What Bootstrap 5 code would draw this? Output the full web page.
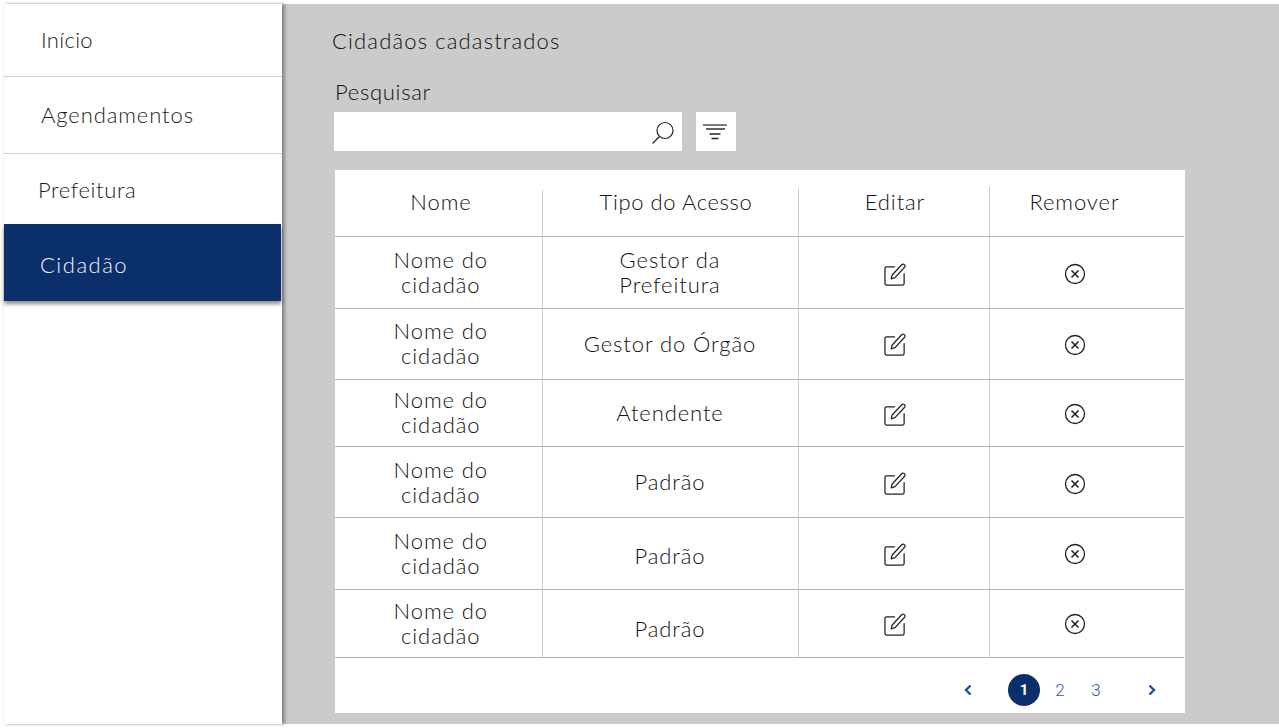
<!DOCTYPE html>
<html lang="pt-BR">
<head>
    <meta charset="UTF-8">
    <meta name="viewport" content="width=device-width, initial-scale=1.0">
    <title>Cidadãos cadastrados</title>
    <link rel="stylesheet" href="https://cdn.jsdelivr.net/npm/bootstrap@5.3.0/dist/css/bootstrap.min.css">
    <style>
        html, body { height: 100%; overflow: hidden; }
        body {
            background: #fff;
            padding: 4px 0 4px 4px;
            font-family: "Lato", "Liberation Sans", sans-serif;
            font-weight: 300;
            color: #111;
            letter-spacing: .9px;
        }
        .painel { height: 720px; }

        /* menu lateral */
        .lateral {
            width: 278px;
            flex: none;
            background: #fff;
            position: relative;
            z-index: 1;
            box-shadow: 3px 0 3px rgba(0, 0, 0, .3), 0 0 1px rgba(0, 0, 0, .3);
        }
        .lateral .list-group-item {
            border-width: 0 0 1px;
            border-color: #cfcfcf;
            font-size: 22px;
            color: #1c1c1c;
            display: flex;
            align-items: center;
            padding: 0 0 0 37px;
            background: transparent;
        }
        .lateral .item-inicio { height: 73px; padding-bottom: 2px; letter-spacing: .3px; }
        .lateral .item-agenda { height: 77px; padding-bottom: 2px; }
        .lateral .item-prefeitura { height: 70px; padding-left: 34px; border-bottom: 0; letter-spacing: .6px; }
        .lateral .item-ativo {
            height: 77px;
            width: 277px;
            background: #0b2f6b;
            color: #eef3fb;
            padding: 3px 0 0 36px;
            border: 0;
            letter-spacing: 1.5px;
            box-shadow: 0 3px 4px rgba(0, 0, 0, .45);
        }

        /* area principal */
        .conteudo {
            background: #cbcbcb;
            padding: 0 0 0 52px;
        }
        .titulo-pagina {
            font-size: 22px;
            font-weight: 300;
            line-height: 30px;
            letter-spacing: 1.15px;
            margin: 22px 0 0 -2px;
        }
        .rotulo-busca {
            font-size: 22px;
            line-height: 30px;
            letter-spacing: .7px;
            margin: 21px 0 5px 1px;
        }
        .caixa-busca { width: 348px; height: 39px; }
        .caixa-busca input {
            border: 0;
            border-radius: 0;
            height: 39px;
            padding-right: 40px;
        }
        .icone-lupa { position: absolute; right: 6px; top: 7px; }
        .btn-filtro {
            width: 40px;
            height: 39px;
            padding: 0;
            border: 0;
            border-radius: 0;
            background: #fff;
            margin-left: 14px;
        }

        /* tabela */
        .quadro {
            width: 850px;
            height: 543px;
            margin: 19px 0 0 1px;
            background: #fff;
        }
        .quadro .table {
            table-layout: fixed;
            width: 849px;
            margin: 0;
            font-size: 22px;
            line-height: 25px;
            --bs-table-color: #111;
        }
        .quadro th, .quadro td {
            font-weight: 300;
            text-align: center;
            vertical-align: middle;
            padding: 0;
            border-color: #b5b5b5;
        }
        .quadro td { border-right: 1px solid #cfcfcf; }
        .quadro td:first-child, .cab-nome { padding-left: 5px; }
        .quadro td:nth-child(3), .cab-editar { padding-left: 3px; }
        .quadro td:last-child, .quadro th:last-child { border-right: 0; padding-right: 24px; }
        .quadro tbody tr:nth-child(2) td,
        .quadro tbody tr:nth-child(3) td,
        .quadro tbody tr:nth-child(5) td { padding-bottom: 1px; }
        .quadro tbody tr:nth-child(2) .cel-icone,
        .quadro tbody tr:nth-child(5) .cel-icone,
        .quadro tbody tr:nth-child(6) .cel-icone { padding-bottom: 2px; }
        .cel-icone svg { vertical-align: middle; }
        .col-nome { width: 207px; }
        .col-tipo { width: 256px; }
        .col-editar { width: 191px; }
        .cabecalho { height: 66px; }
        .cabecalho th { vertical-align: bottom; }
        .cab-celula {
            display: flex;
            align-items: center;
            justify-content: center;
            height: 46px;
            margin-right: -1px;
            padding-bottom: 22px;
            border-right: 1px solid #cfcfcf;
        }
        .cab-alta { height: 48px; padding: 0 0 20px 12px; letter-spacing: .6px; }
        .cab-maior { height: 50px; padding-bottom: 18px; }
        th:last-child .cab-celula { border-right: 0; margin-right: 0; }
        .linha-a { height: 72px; }
        .linha-b { height: 71px; }
        .linha-c { height: 67px; }
        .linha-d { height: 68px; }
        .quadro td.desce-1 { padding-top: 6px; padding-bottom: 0; }
        .quadro td.desce-2 { padding-top: 10px; }

        /* paginacao */
        .paginas { padding: 16px 0 0 0; }
        .paginas .pagination { margin: 0 21px 0 0; align-items: center; }
        .paginas .page-item .page-link,
        .paginas .page-item:not(:first-child) .page-link {
            border: 0;
            background: transparent;
            color: #2c5a9e;
            padding: 0;
            margin-left: 0;
            width: 36px;
            height: 32px;
            line-height: 32px;
            text-align: center;
            font-family: "Roboto", sans-serif;
            font-size: 17px;
            letter-spacing: 0;
        }
        .paginas .page-item .seta,
        .paginas .page-item:not(:first-child) .seta { width: 24px; display: flex; align-items: center; justify-content: center; }
        .paginas .item-esq { margin-right: 28px; }
        .paginas .item-dir { margin-left: 26px; }
        .paginas .atual { margin-right: 2px; }
        .paginas .page-item.atual .page-link,
        .paginas .page-item.atual:not(:first-child) .page-link {
            width: 32px;
            border-radius: 50%;
            background: #0b2f6b;
            color: #fff;
            font-weight: 700;
            font-size: 15px;
        }
    </style>
</head>
<body>
    <div class="painel d-flex">
        <!-- Menu lateral -->
        <div class="lateral">
            <div class="list-group list-group-flush">
                <a href="#" class="list-group-item item-inicio">Início</a>
                <a href="#" class="list-group-item item-agenda">Agendamentos</a>
                <a href="#" class="list-group-item item-prefeitura">Prefeitura</a>
                <a href="#" class="list-group-item item-ativo">Cidadão</a>
            </div>
        </div>

        <!-- Conteudo -->
        <div class="conteudo flex-grow-1">
            <h1 class="titulo-pagina">Cidadãos cadastrados</h1>
            <div class="rotulo-busca">Pesquisar</div>
            <div class="d-flex">
                <div class="caixa-busca position-relative">
                    <input type="text" class="form-control" aria-label="Pesquisar">
                    <svg class="icone-lupa" width="26" height="26" viewBox="0 0 26 26" fill="none" stroke="#222" stroke-width="1.2">
                        <circle cx="15" cy="11.5" r="8"/>
                        <path d="M9.5 17.5 2.500 24.500"/>
                    </svg>
                </div>
                <button type="button" class="btn btn-filtro d-flex align-items-center justify-content-center" aria-label="Filtrar">
                    <svg width="26" height="16" viewBox="0 0 26 16" stroke="#222" fill="none">
                        <path d="M0 1H24" stroke-width="1.200"/>
                        <path d="M3 5H22" stroke-width="1.400"/>
                        <path d="M6.500 10H17.500" stroke-width="1.500"/>
                        <path d="M8.500 14.500H15.500" stroke-width="1.500"/>
                    </svg>
                </button>
            </div>

            <div class="quadro">
                <table class="table">
                    <thead>
                        <tr class="cabecalho">
                            <th class="col-nome"><div class="cab-celula cab-nome">Nome</div></th>
                            <th class="col-tipo"><div class="cab-celula cab-alta">Tipo do Acesso</div></th>
                            <th class="col-editar"><div class="cab-celula cab-maior cab-editar">Editar</div></th>
                            <th><div class="cab-celula">Remover</div></th>
                        </tr>
                    </thead>
                    <tbody id="linhas"></tbody>
                </table>
                <div class="paginas d-flex justify-content-end">
                    <ul class="pagination">
                        <li class="page-item item-esq"><a class="page-link seta" href="#" aria-label="Anterior"><svg width="10" height="12" viewBox="0 0 10 12" fill="none" stroke="#1f4f9c" stroke-width="2.400"><path d="M7.500 1.500 3 6l4.500 4.500"/></svg></a></li>
                        <li class="page-item atual"><a class="page-link" href="#">1</a></li>
                        <li class="page-item"><a class="page-link" href="#">2</a></li>
                        <li class="page-item"><a class="page-link" href="#">3</a></li>
                        <li class="page-item item-dir"><a class="page-link seta" href="#" aria-label="Próxima"><svg width="10" height="12" viewBox="0 0 10 12" fill="none" stroke="#1f4f9c" stroke-width="2.400"><path d="M2.500 1.500 7 6l-4.500 4.500"/></svg></a></li>
                    </ul>
                </div>
            </div>
        </div>
    </div>

    <script src="https://cdn.jsdelivr.net/npm/bootstrap@5.3.0/dist/js/bootstrap.bundle.min.js"></script>
    <script>
        const cidadaos = [
            { tipo: 'Gestor da<br>Prefeitura', altura: 'linha-a', classe: '' },
            { tipo: 'Gestor do Órgão', altura: 'linha-b', classe: '' },
            { tipo: 'Atendente', altura: 'linha-c', classe: '' },
            { tipo: 'Padrão', altura: 'linha-b', classe: '' },
            { tipo: 'Padrão', altura: 'linha-a', classe: 'desce-1' },
            { tipo: 'Padrão', altura: 'linha-d', classe: 'desce-2' }
        ];

        const iconeEditar = `<svg width="23" height="23" viewBox="0 0 24 24" fill="none" stroke="#222" stroke-width="1.300" stroke-linejoin="round" stroke-linecap="round">
            <path d="M11 4H2.500A1.500 1.500 0 0 0 1 5.500V21.500A1.500 1.500 0 0 0 2.500 23H19.500A1.500 1.500 0 0 0 21 21.500V11"/>
            <path d="M7.500 16.500 8.500 12.500 18.500 1.800C19.300 1 20.500 1 21.300 1.700 22.100 2.400 22.200 3.600 21.500 4.400L11.500 15.300Z"/>
        </svg>`;
        const iconeRemover = `<svg width="22" height="22" viewBox="0 0 22 22" fill="none" stroke="#222">
            <circle cx="11" cy="11" r="9.500" stroke-width="1.300"/>
            <path d="M7.500 7.500 14.500 14.500M14.500 7.500 7.500 14.500" stroke-width="1.600"/>
        </svg>`;

        document.getElementById('linhas').innerHTML = cidadaos.map(c => `
            <tr class="${c.altura}">
                <td>Nome do<br>cidadão</td>
                <td class="${c.classe}">${c.tipo}</td>
                <td class="cel-icone">${iconeEditar}</td>
                <td class="cel-icone">${iconeRemover}</td>
            </tr>`).join('');
    </script>
</body>
</html>
